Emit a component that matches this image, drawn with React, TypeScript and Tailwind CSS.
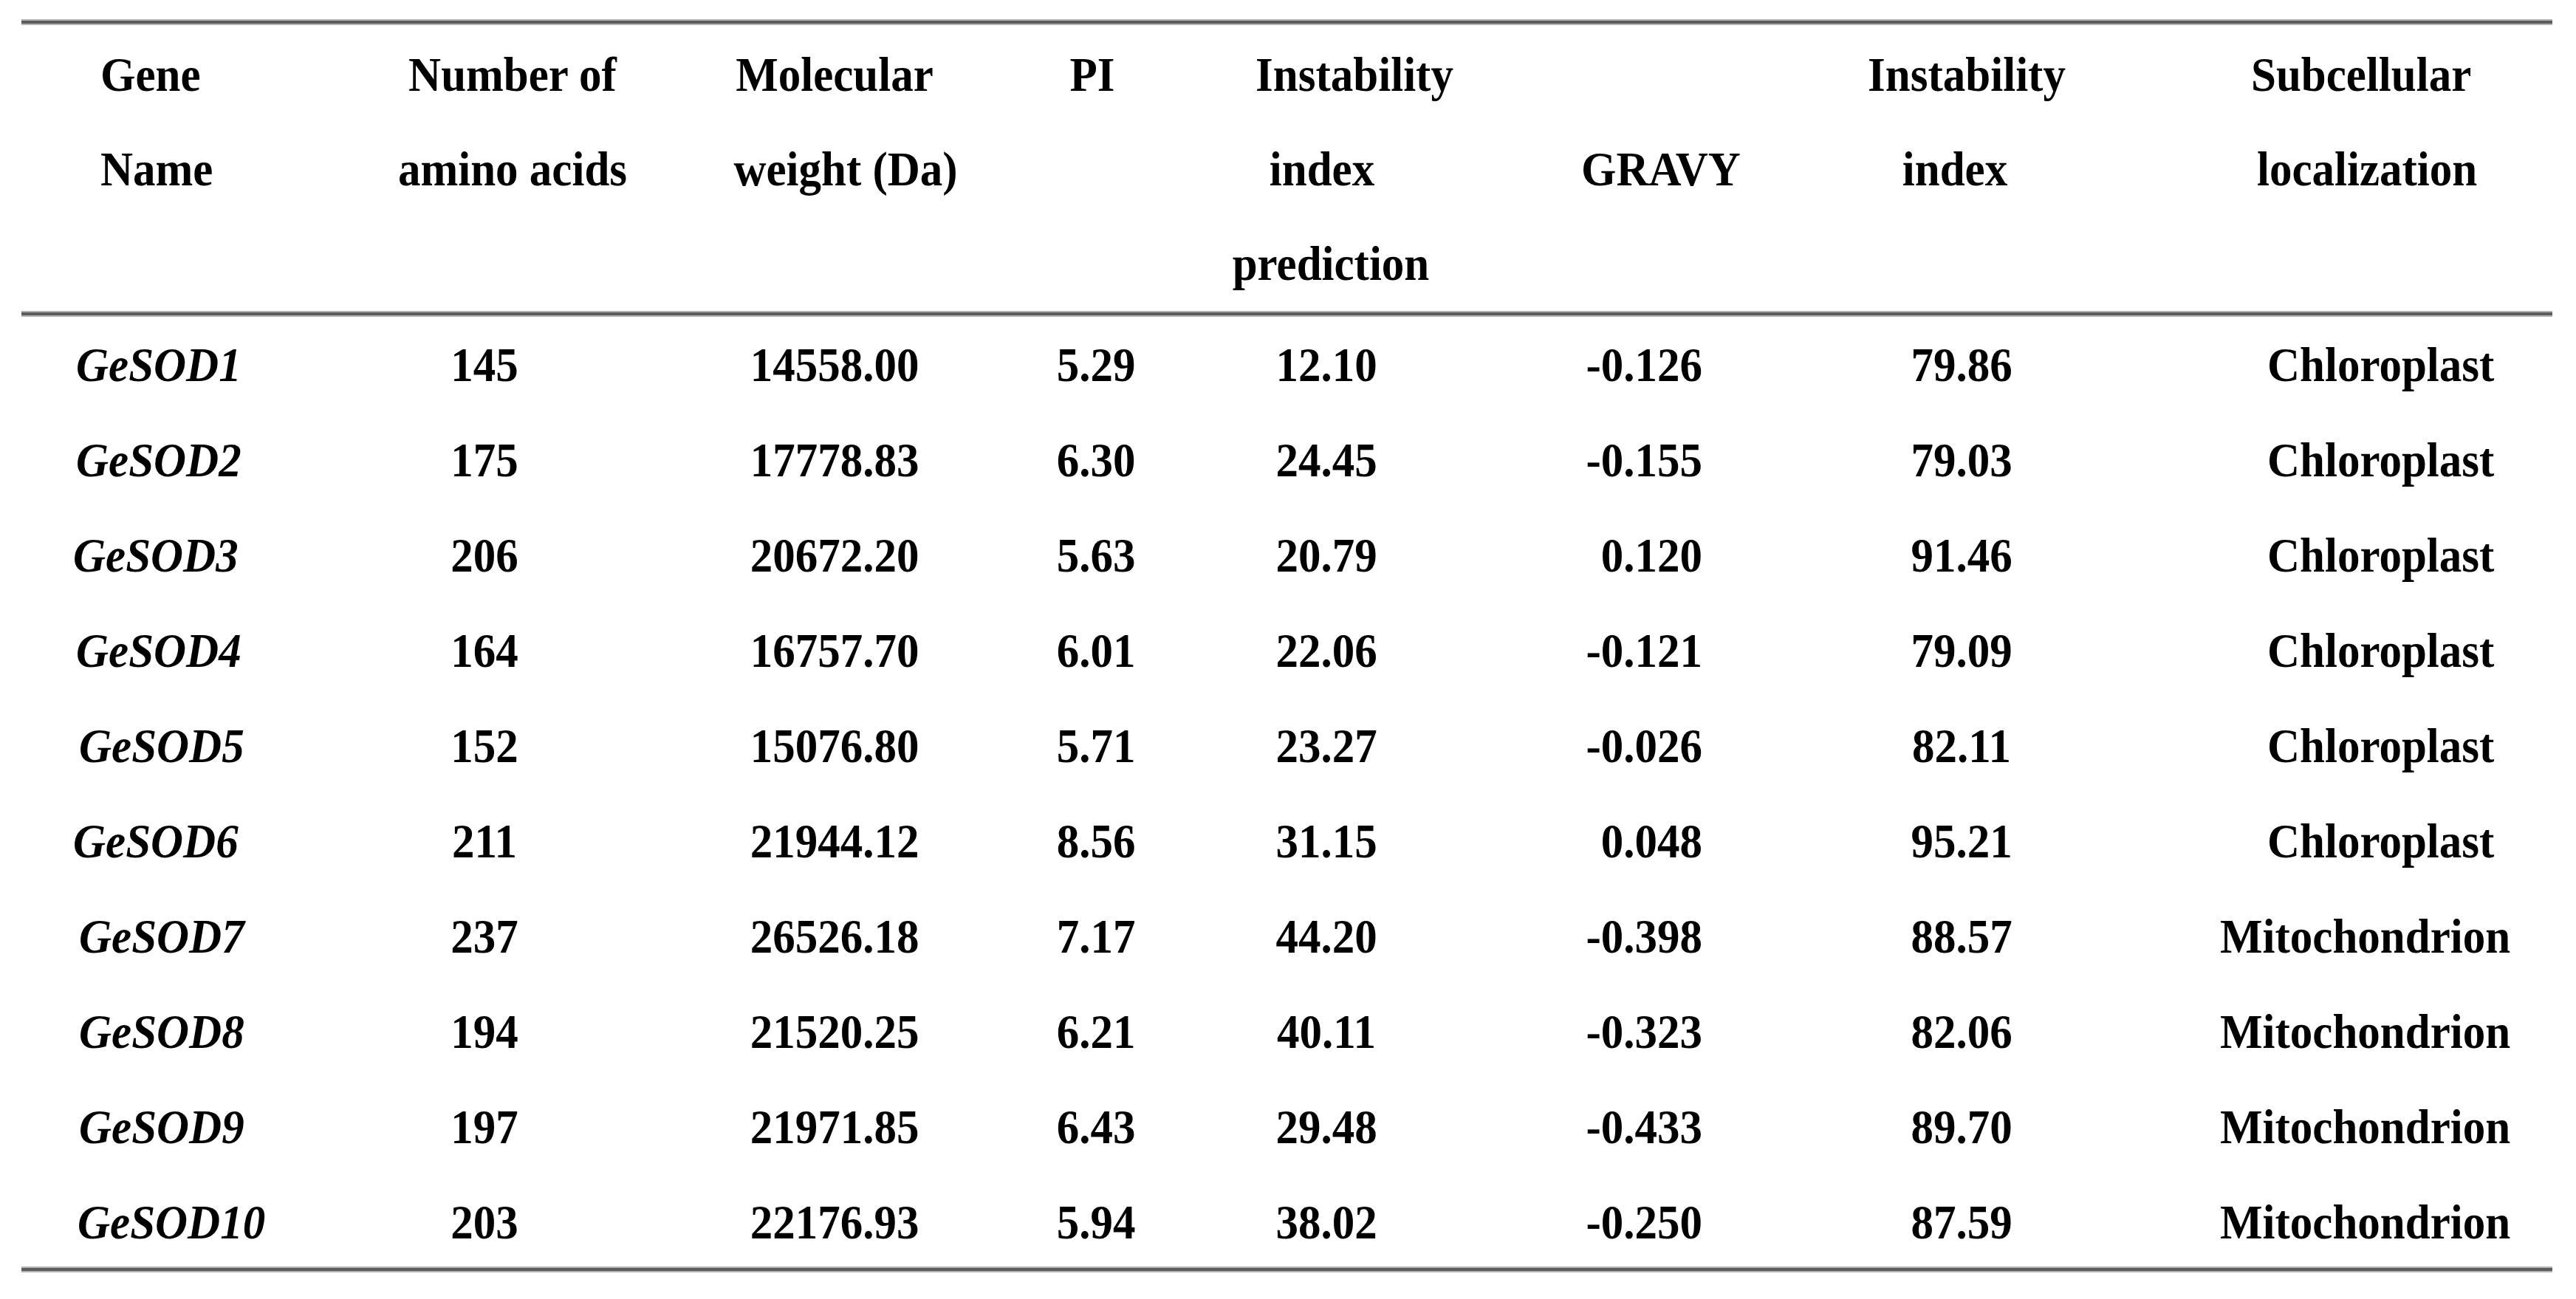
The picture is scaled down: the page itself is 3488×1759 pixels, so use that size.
import React from "react"

type Row = {
  gene: string
  genePad: string
  aa: string
  mw: string
  pi: string
  inst: string
  gravy: string
  instIdx: string
  loc: string
}

const rows: Row[] = [
  { gene: "GeSOD1", genePad: "pl-[74px]", aa: "145", mw: "14558.00", pi: "5.29", inst: "12.10", gravy: "-0.126", instIdx: "79.86", loc: "Chloroplast" },
  { gene: "GeSOD2", genePad: "pl-[74px]", aa: "175", mw: "17778.83", pi: "6.30", inst: "24.45", gravy: "-0.155", instIdx: "79.03", loc: "Chloroplast" },
  { gene: "GeSOD3", genePad: "pl-[70px]", aa: "206", mw: "20672.20", pi: "5.63", inst: "20.79", gravy: "0.120", instIdx: "91.46", loc: "Chloroplast" },
  { gene: "GeSOD4", genePad: "pl-[74px]", aa: "164", mw: "16757.70", pi: "6.01", inst: "22.06", gravy: "-0.121", instIdx: "79.09", loc: "Chloroplast" },
  { gene: "GeSOD5", genePad: "pl-[78px]", aa: "152", mw: "15076.80", pi: "5.71", inst: "23.27", gravy: "-0.026", instIdx: "82.11", loc: "Chloroplast" },
  { gene: "GeSOD6", genePad: "pl-[70px]", aa: "211", mw: "21944.12", pi: "8.56", inst: "31.15", gravy: "0.048", instIdx: "95.21", loc: "Chloroplast" },
  { gene: "GeSOD7", genePad: "pl-[78px]", aa: "237", mw: "26526.18", pi: "7.17", inst: "44.20", gravy: "-0.398", instIdx: "88.57", loc: "Mitochondrion" },
  { gene: "GeSOD8", genePad: "pl-[78px]", aa: "194", mw: "21520.25", pi: "6.21", inst: "40.11", gravy: "-0.323", instIdx: "82.06", loc: "Mitochondrion" },
  { gene: "GeSOD9", genePad: "pl-[78px]", aa: "197", mw: "21971.85", pi: "6.43", inst: "29.48", gravy: "-0.433", instIdx: "89.70", loc: "Mitochondrion" },
  { gene: "GeSOD10", genePad: "pl-[76px]", aa: "203", mw: "22176.93", pi: "5.94", inst: "38.02", gravy: "-0.250", instIdx: "87.59", loc: "Mitochondrion" },
]

// header lines per column: [text, classes]; "" leaves the line empty
const header: { width: string; lines: [string, string][] }[] = [
  { width: "w-[371px]", lines: [["Gene", "text-left pl-[107px]"], ["Name", "text-left pl-[107px]"], ["", ""]] },
  { width: "w-[512px]", lines: [["Number of", "text-center pl-[76px]"], ["amino acids", "text-center pl-[76px]"], ["", ""]] },
  { width: "w-[436px]", lines: [["Molecular", "text-center"], ["weight (Da)", "text-center pl-[30px]"], ["", ""]] },
  { width: "w-[272px]", lines: [["PI", "text-center pr-[10px]"], ["", ""], ["", ""]] },
  { width: "w-[352px]", lines: [["Instability", "text-center pl-[76px]"], ["index", "text-center pr-[12px]"], ["prediction", "text-center pl-[12px]"]] },
  { width: "w-[506px]", lines: [["", ""], ["GRAVY", "text-center pl-[48px]"], ["", ""]] },
  { width: "w-[356px]", lines: [["Instability", "text-center pl-[14px]"], ["index", "text-center pr-[18px]"], ["", ""]] },
  { width: "w-[622px]", lines: [["Subcellular", "text-left pl-[214px]"], ["localization", "text-left pl-[222px]"], ["", ""]] },
]

function Rule() {
  return <div className="h-[8px] w-full border-y-2 border-[#b4b4b4] bg-[#5c5c5c]" />
}

function T({ children, italic }: { children: React.ReactNode; italic?: boolean }) {
  return <span className={`inline-block scale-y-[1.09] whitespace-pre ${italic ? "italic" : ""}`}>{children}</span>
}

export default function App() {
  return (
    <div className="min-h-screen w-full bg-white pt-[26px] font-['Liberation_Serif','Times_New_Roman',serif] text-[61px] font-bold text-black">
      <div className="ml-[29px] w-[3427px]">
        <Rule />

        {/* Header */}
        <div className="flex pt-[3px]">
          {header.map((col, i) => (
            <div key={i} className={`${col.width} flex shrink-0 flex-col`}>
              {col.lines.map(([text, cls], j) => (
                <div key={j} className={`h-[128px] leading-[128px] ${cls}`}>
                  {text && <T>{text}</T>}
                </div>
              ))}
            </div>
          ))}
        </div>

        <Rule />

        {/* Body */}
        <div className="flex flex-col">
          {rows.map((r) => (
            <div key={r.gene} className="flex h-[129px] leading-[129px]">
              <div className={`w-[371px] shrink-0 text-left ${r.genePad}`}>
                <T italic>{r.gene}</T>
              </div>
              <div className="w-[512px] shrink-0 text-center">
                <T>{r.aa}</T>
              </div>
              <div className="w-[436px] shrink-0 text-center">
                <T>{r.mw}</T>
              </div>
              <div className="w-[272px] shrink-0 text-center">
                <T>{r.pi}</T>
              </div>
              <div className="w-[352px] shrink-0 text-center">
                <T>{r.inst}</T>
              </div>
              <div className="w-[506px] shrink-0 pr-[173px] text-right">
                <T>{r.gravy}</T>
              </div>
              <div className="w-[356px] shrink-0 text-center">
                <T>{r.instIdx}</T>
              </div>
              <div className={`w-[622px] shrink-0 text-left ${r.loc === "Chloroplast" ? "pl-[236px]" : "pl-[172px]"}`}>
                <T>{r.loc}</T>
              </div>
            </div>
          ))}
        </div>

        <div className="-mt-[4px]">
          <Rule />
        </div>
      </div>
    </div>
  )
}
